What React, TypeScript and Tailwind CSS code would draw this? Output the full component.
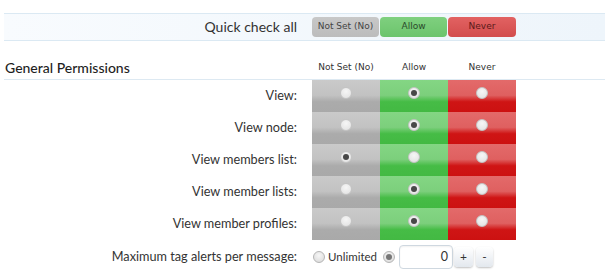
import React from "react";

const rows = [
  { label: "View:", value: 1 },
  { label: "View node:", value: 1 },
  { label: "View members list:", value: 0 },
  { label: "View member lists:", value: 1 },
  { label: "View member profiles:", value: 1 },
];

const cellBg = [
  "bg-[linear-gradient(to_bottom,#cacaca_0%,#c2c2c2_48%,#ababab_68%,#a9a9a9_100%)]",
  "bg-[linear-gradient(to_bottom,#84d684_0%,#7ccf7c_48%,#46bc46_68%,#43b943_100%)]",
  "bg-[linear-gradient(to_bottom,#e36a6a_0%,#df6060_48%,#cf1515_68%,#cc1111_100%)]",
];

function Radio({ checked }: { checked: boolean }) {
  return (
    <span className="flex h-[12px] w-[12px] items-center justify-center rounded-full border border-[#c4c4c4] bg-[radial-gradient(circle_at_50%_35%,#f6f6f6,#e0e0e0)]">
      {checked && <span className="h-[6px] w-[6px] rounded-full bg-[#484848]" />}
    </span>
  );
}

export default function App() {
  const font = "font-['Lato','DejaVu_Sans',sans-serif]";
  const small = "font-['DejaVu_Sans',sans-serif]";
  return (
    <div className={`h-[274px] w-[605px] overflow-hidden bg-white text-[#333] ${font}`}>
      {/* Quick check bar */}
      <div className="ml-[4px] mt-[13px] flex h-[28px] items-center border-y border-[#dbe9f3] bg-[linear-gradient(to_right,#f8fbfe,#eef5fb)]">
        <div className="w-[293px] text-right text-[14px] leading-none">Quick check all</div>
        <div className="ml-[15px] flex">
          <div className={`flex h-[20px] w-[67px] items-center justify-center rounded-[4px] bg-[linear-gradient(to_bottom,#c8c8c8,#bcbcbc)] text-[9px] text-[#444] ${small}`}>
            Not Set (No)
          </div>
          <div className={`ml-[1px] flex h-[20px] w-[67px] items-center justify-center rounded-[4px] bg-[linear-gradient(to_bottom,#7fd07f,#6cc46c)] text-[9px] text-[#2a4a2a] ${small}`}>
            Allow
          </div>
          <div className={`ml-[1px] flex h-[20px] w-[68px] items-center justify-center rounded-[4px] bg-[linear-gradient(to_bottom,#e26262,#d24c4c)] text-[9px] text-[#5a1a1a] ${small}`}>
            Never
          </div>
        </div>
      </div>

      {/* Header */}
      <div className="ml-[4px] mt-[17px] flex h-[22px] items-start border-b border-[#dde9f2]">
        <div className="w-[308px] pl-[1px] text-[14px] font-medium leading-[20px] text-[#1f1f1f]">General Permissions</div>
        <div className={`flex pt-[3px] text-[9px] text-[#333] ${small}`}>
          <div className="w-[68px] text-center">Not Set (No)</div>
          <div className="w-[68px] text-center">Allow</div>
          <div className="w-[68px] text-center">Never</div>
        </div>
      </div>

      {/* Rows */}
      <div className="flex flex-col">
        {rows.map((r) => (
          <div key={r.label} className="flex h-[32px]">
            <div className="flex w-[312px] items-center justify-end pb-[1px] pr-[15px] text-[12.7px]">{r.label}</div>
            {[0, 1, 2].map((c) => (
              <div key={c} className={`flex w-[68px] justify-center pt-[7px] ${cellBg[c]}`}>
                <Radio checked={r.value === c} />
              </div>
            ))}
          </div>
        ))}
      </div>

      {/* Max tag alerts */}
      <div className="flex h-[34px] items-center">
        <div className="w-[312px] pr-[15px] text-right text-[12.7px]">Maximum tag alerts per message:</div>
        <span className="ml-[1px] h-[12px] w-[12px] shrink-0 rounded-full border border-[#b5b5b5] bg-[radial-gradient(circle_at_50%_35%,#f6f6f6,#d8d8d8)]" />
        <span className="ml-[3px] w-[50px] shrink-0 whitespace-nowrap text-[11.5px]">Unlimited</span>
        <span className="ml-[5px] flex h-[12px] w-[12px] shrink-0 items-center justify-center rounded-full border border-[#b5b5b5] bg-[radial-gradient(circle_at_50%_35%,#f6f6f6,#d8d8d8)]">
          <span className="h-[6px] w-[6px] rounded-full bg-[#777]" />
        </span>
        <div className="ml-[4px] flex h-[24px] w-[54px] shrink-0 items-center justify-end rounded-[4px] border border-[#cfd8e0] bg-white pr-[4px] text-[12.5px] shadow-[inset_0_1px_2px_rgba(0,0,0,0.06)]">
          0
        </div>
        <div className="ml-[1px] flex h-[20px] w-[19px] shrink-0 items-center justify-center rounded-[4px] bg-[linear-gradient(to_bottom,#ffffff,#e3e8ee)] text-[12px] shadow-[0_1px_2px_rgba(0,0,0,0.25)]">
          +
        </div>
        <div className="ml-[3px] flex h-[20px] w-[17px] shrink-0 items-center justify-center rounded-[4px] bg-[linear-gradient(to_bottom,#ffffff,#e3e8ee)] text-[12px] shadow-[0_1px_2px_rgba(0,0,0,0.25)]">
          -
        </div>
      </div>
    </div>
  );
}
